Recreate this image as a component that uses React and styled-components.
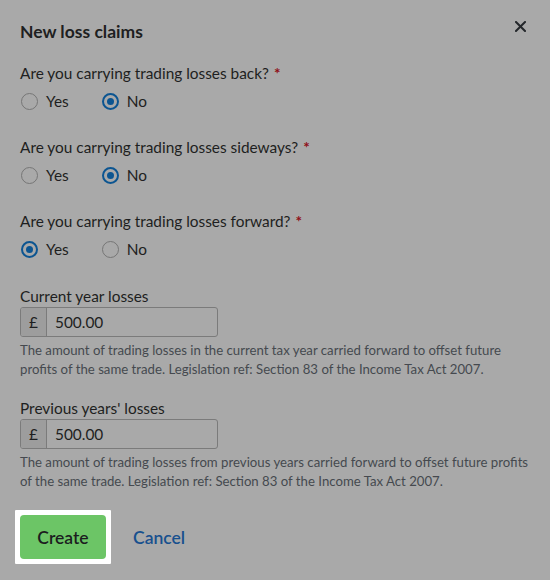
import React, { useState } from "react";
import styled, { createGlobalStyle } from "styled-components";

const GlobalStyle = createGlobalStyle`
  html, body {
    margin: 0;
    padding: 0;
    background: #a9a9a9;
  }
  body {
    font-family: "Lato", "Liberation Sans", sans-serif;
    color: #1e1f21;
  }
`;

const Modal = styled.div`
  width: 550px;
  height: 580px;
  box-sizing: border-box;
  padding: 19px 20px 0 20px;
  background: #a9a9a9;
  display: flex;
  flex-direction: column;
`;

const Header = styled.div`
  display: flex;
  justify-content: space-between;
  align-items: center;
  height: 24px;
`;

const Title = styled.h2`
  margin: 0;
  font-size: 17.5px;
  font-weight: 700;
  color: #1e1f21;
`;

const CloseButton = styled.button`
  border: 0;
  background: none;
  padding: 0;
  margin-right: 3px;
  margin-top: -10px;
  width: 14px;
  height: 14px;
  display: flex;
  align-items: center;
  justify-content: center;
  cursor: pointer;
`;

const Question = styled.div`
  margin-top: ${(p) => p.$gap}px;
`;

const Label = styled.div`
  font-size: 15.4px;
  line-height: 22px;
  color: #1e1f21;
`;

const Required = styled.span`
  color: #8f0f17;
  font-weight: 700;
  margin-left: 5px;
`;

const RadioRow = styled.div`
  display: flex;
  align-items: center;
  gap: 32px;
  margin-top: 6px;
  height: 22px;
`;

const RadioOption = styled.label`
  display: flex;
  align-items: center;
  gap: 8px;
  font-size: 15.4px;
  color: #1e1f21;
  cursor: pointer;
`;

const RadioCircle = styled.span`
  width: 17px;
  height: 17px;
  box-sizing: border-box;
  border-radius: 50%;
  border: ${(p) => (p.$checked ? "2px solid #0c5591" : "1px solid #767676")};
  display: flex;
  align-items: center;
  justify-content: center;
  margin-left: 1px;

  &::after {
    content: "";
    width: 7px;
    height: 7px;
    border-radius: 50%;
    background: #0c5591;
    display: ${(p) => (p.$checked ? "block" : "none")};
  }
`;

const Field = styled.div`
  margin-top: ${(p) => p.$gap}px;
`;

const InputGroup = styled.div`
  display: flex;
  width: 198px;
  height: 30px;
  box-sizing: border-box;
  border: 1px solid #7b7b7b;
  border-radius: 3px;
  overflow: hidden;
`;

const Prefix = styled.span`
  flex: 0 0 25px;
  display: flex;
  align-items: center;
  justify-content: center;
  background: #9d9d9d;
  border-right: 1px solid #7b7b7b;
  font-size: 15.4px;
  color: #1e1f21;
`;

const Input = styled.input`
  flex: 1;
  min-width: 0;
  border: 0;
  background: transparent;
  padding: 0 8px;
  font-family: inherit;
  font-size: 15.4px;
  color: #1e1f21;
  outline: none;
`;

const Help = styled.p`
  margin: 4px 0 0 0;
  font-size: 13.2px;
  line-height: 19px;
  color: #45494f;
`;

const Actions = styled.div`
  display: flex;
  align-items: center;
  gap: 22px;
  margin-top: 19px;
  margin-left: -5px;
`;

const Spotlight = styled.div`
  background: #ffffff;
  padding: 5px;
  border-radius: 1px;
`;

const CreateButton = styled.button`
  display: block;
  width: 86px;
  height: 44px;
  border: 0;
  border-radius: 4px;
  background: #6cc566;
  color: #1c1d1f;
  font-family: inherit;
  font-size: 17.5px;
  font-weight: 600;
  cursor: pointer;
`;

const CancelButton = styled.button`
  border: 0;
  background: none;
  padding: 0;
  color: #17508e;
  font-family: inherit;
  font-size: 17.5px;
  font-weight: 600;
  cursor: pointer;
`;

const questions = [
  { id: "back", text: "Are you carrying trading losses back?", value: "no", gap: 19 },
  { id: "sideways", text: "Are you carrying trading losses sideways?", value: "no", gap: 24 },
  { id: "forward", text: "Are you carrying trading losses forward?", value: "yes", gap: 24 },
];

const fields = [
  {
    id: "current",
    label: "Current year losses",
    value: "500.00",
    gap: 25,
    help: "The amount of trading losses in the current tax year carried forward to offset future profits of the same trade. Legislation ref: Section 83 of the Income Tax Act 2007.",
  },
  {
    id: "previous",
    label: "Previous years' losses",
    value: "500.00",
    gap: 18,
    help: "The amount of trading losses from previous years carried forward to offset future profits of the same trade. Legislation ref: Section 83 of the Income Tax Act 2007.",
  },
];

const App = () => {
  const [answers, setAnswers] = useState(
    Object.fromEntries(questions.map((q) => [q.id, q.value]))
  );
  const [values, setValues] = useState(
    Object.fromEntries(fields.map((f) => [f.id, f.value]))
  );

  return (
    <>
      <GlobalStyle />
      <Modal>
        <Header>
          <Title>New loss claims</Title>
          <CloseButton aria-label="Close">
            <svg width="11" height="11" viewBox="0 0 11 11">
              <path d="M1 1L10 10M10 1L1 10" stroke="#24272b" strokeWidth="2" strokeLinecap="square" />
            </svg>
          </CloseButton>
        </Header>

        {questions.map((q) => (
          <Question key={q.id} $gap={q.gap}>
            <Label>
              {q.text}
              <Required>*</Required>
            </Label>
            <RadioRow>
              {["yes", "no"].map((opt) => (
                <RadioOption
                  key={opt}
                  onClick={() => setAnswers({ ...answers, [q.id]: opt })}
                >
                  <RadioCircle $checked={answers[q.id] === opt} />
                  {opt === "yes" ? "Yes" : "No"}
                </RadioOption>
              ))}
            </RadioRow>
          </Question>
        ))}

        {fields.map((f) => (
          <Field key={f.id} $gap={f.gap}>
            <Label>{f.label}</Label>
            <InputGroup>
              <Prefix>£</Prefix>
              <Input
                value={values[f.id]}
                onChange={(e) => setValues({ ...values, [f.id]: e.target.value })}
              />
            </InputGroup>
            <Help>{f.help}</Help>
          </Field>
        ))}

        <Actions>
          <Spotlight>
            <CreateButton>Create</CreateButton>
          </Spotlight>
          <CancelButton>Cancel</CancelButton>
        </Actions>
      </Modal>
    </>
  );
};

export default App;
